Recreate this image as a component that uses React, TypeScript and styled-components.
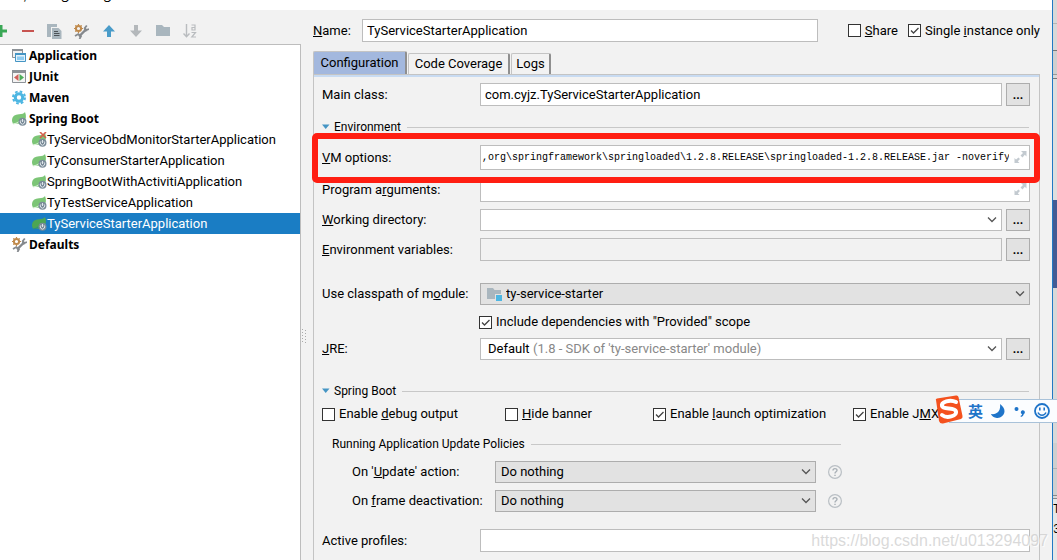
import React from "react";
import styled, { createGlobalStyle } from "styled-components";

const GlobalStyle = createGlobalStyle`
  * { box-sizing: border-box; }
  body {
    margin: 0;
    background: #f2f2f2;
    color: #000;
    font: 13px/20px Roboto, "Noto Sans CJK SC", sans-serif;
  }
  button, input, select { font: inherit; color: inherit; margin: 0; border-radius: 0; }
`;

const line = "#bdbdbd";

/* ---------- frame ---------- */

const Desktop = styled.div`
  position: relative;
  display: flex;
  min-height: 100vh;
  overflow: hidden;
`;

const Dialog = styled.main`
  flex: 1;
  min-width: 0;
  display: flex;
  flex-direction: column;
  border-right: 1px solid #2179c4;
`;

const TitleBar = styled.header`
  display: flex;
  align-items: flex-end;
  height: 10px;
  padding-bottom: 8px;
  overflow: hidden;
  background: #fff;
  white-space: nowrap;
`;

const Title = styled.h1`
  margin: 0;
  font: 400 13px/16px "Noto Sans CJK SC", sans-serif;
`;

const Columns = styled.div`
  flex: 1;
  display: flex;
`;

const Backdrop = styled.div`
  width: 4px;
  overflow: hidden;
  background: #dcdcdc;
`;

const Strip = styled.div<{ $h: number; $bg?: string; $edge?: string }>`
  height: ${(p) => p.$h}px;
  background: ${(p) => p.$bg ?? "#d8d8d8"};
  border-bottom: 1px solid ${(p) => p.$edge ?? "transparent"};
  font: 12px/22px "Liberation Mono", monospace;
`;

/* ---------- left side ---------- */

const Sidebar = styled.aside`
  width: 301px;
  flex: none;
  display: flex;
  flex-direction: column;
`;

const Toolbar = styled.div`
  display: flex;
  align-items: center;
  height: 34px;
  margin-left: -13px;
  padding-top: 8px;
`;

const ToolButton = styled.button`
  display: grid;
  place-items: center;
  width: 27px;
  height: 24px;
  padding: 0;
  border: 0;
  background: none;
`;

const Tree = styled.ul`
  flex: 1;
  margin: 0;
  padding: 0;
  list-style: none;
  background: #fff;
  border: solid ${line};
  border-width: 1px 1px 0 0;
`;

const TreeRow = styled.li<{ $child?: boolean; $selected?: boolean }>`
  display: flex;
  align-items: center;
  height: 21px;
  gap: ${(p) => (p.$child ? 0 : 2)}px;
  padding-left: ${(p) => (p.$child ? 32 : 12)}px;
  ${(p) => !p.$child && `font: 700 12px/20px "Noto Sans", sans-serif;`}
  color: ${(p) => (p.$selected ? "#fff" : "#000")};
  background: ${(p) => (p.$selected ? "#1a7dc4" : "transparent")};
  white-space: nowrap;
  svg { flex: none; }
`;

const Grip = styled.div`
  position: absolute;
  left: 302px;
  top: 329px;
`;

/* ---------- right side ---------- */

const Editor = styled.section`
  flex: 1;
  min-width: 0;
  display: flex;
  flex-direction: column;
  padding: 9px 12px 0;
`;

const NameRow = styled.div`
  display: flex;
  align-items: center;
  label { white-space: nowrap; }
`;

const NameLabel = styled.label`
  width: 49px;
`;

const Tabs = styled.div`
  display: flex;
  align-items: flex-end;
  height: 23px;
  margin-top: 9px;
`;

const Tab = styled.button<{ $active?: boolean; $w: number }>`
  width: ${(p) => p.$w}px;
  height: ${(p) => (p.$active ? 23 : 21)}px;
  margin-right: 1px;
  padding: 0;
  line-height: 20px;
  white-space: nowrap;
  border: solid #c4c4c4;
  border-width: 1px 1px 0;
  border-right: 2px solid #8f8f8f;
  border-radius: 2px 2px 0 0;
  background: ${(p) => (p.$active ? "#a3b8de" : "#f2f2f2")};
`;

const Panel = styled.div`
  flex: 1;
  border: solid #c4c4c4;
  border-width: 1px 1px 0;
  padding-bottom: 8px;
  &::before {
    content: "";
    display: block;
    height: 2px;
    background: #c8dbf2;
  }
`;

const Form = styled.form`
  display: flex;
  flex-direction: column;
  padding: 6px 9px 0 8px;
`;

const Row = styled.div<{ $top?: number }>`
  position: relative;
  display: flex;
  align-items: center;
  margin-top: ${(p) => p.$top ?? 7}px;
`;

const Label = styled.label<{ $w?: number }>`
  width: ${(p) => p.$w ?? 158}px;
  flex: none;
  white-space: nowrap;
`;

const TextInput = styled.input<{ $h?: number; $mono?: boolean }>`
  flex: 1;
  min-width: 0;
  height: ${(p) => p.$h ?? 23}px;
  padding: 0 ${(p) => (p.$mono ? 20 : 4)}px 0 ${(p) => (p.$mono ? 1 : 4)}px;
  border: 1px solid ${line};
  background: #fff;
  outline: none;
  ${(p) => p.$mono && `font-family: "Liberation Mono", monospace; font-size: 10px;`}
  &:disabled { background: #f2f2f2; }
`;

const NameInput = styled(TextInput)`
  max-width: 456px;
  margin-right: auto;
`;

const MoreButton = styled.button<{ $h?: number }>`
  width: 24px;
  height: ${(p) => p.$h ?? 23}px;
  margin-left: 4px;
  padding: 0;
  border: 1px solid #adadad;
  background: #e2e2e2;
  font-size: 12px;
  font-weight: 700;
  line-height: 18px;
`;

const SelectBox = styled.div<{ $gray?: boolean }>`
  position: relative;
  display: flex;
  flex: 1;
  height: 22px;
  border: 1px solid ${(p) => (p.$gray ? "#adadad" : line)};
  background: ${(p) => (p.$gray ? "#e2e2e2" : "#fff")};
`;

const Select = styled.select<{ $left?: number }>`
  appearance: none;
  width: 100%;
  padding: 0 24px 0 ${(p) => p.$left ?? 5}px;
  border: 0;
  outline: none;
  background: none;
`;

/* Decorations drawn over a control; clicks pass through to it. */
const Adornment = styled.span<{ $left?: number; $right?: number }>`
  position: absolute;
  top: 0;
  bottom: 0;
  ${(p) => (p.$left !== undefined ? `left: ${p.$left}px;` : `right: ${p.$right ?? 4}px;`)}
  display: flex;
  align-items: center;
  color: #888;
  pointer-events: none;
`;

const CheckLabel = styled.label<{ $left?: number }>`
  display: flex;
  align-items: center;
  gap: 4px;
  height: 20px;
  margin-left: ${(p) => p.$left ?? 0}px;
  white-space: nowrap;
`;

const CheckBox = styled.span`
  position: relative;
  width: 13px;
  height: 13px;
  input {
    appearance: none;
    display: block;
    width: 13px;
    height: 13px;
    border: 1px solid #333;
    background: #fff;
  }
  svg { position: absolute; left: 0; top: 0; pointer-events: none; display: none; }
  input:checked + svg { display: block; }
`;

const CheckGrid = styled.div`
  display: grid;
  grid-template-columns: 183px 148px 200px auto;
  margin-top: 3px;
`;

const Heading = styled.h2<{ $top: number }>`
  display: flex;
  align-items: center;
  gap: 4px;
  height: 20px;
  margin: ${(p) => p.$top}px 1px 0 0;
  font-size: 12px;
  font-weight: 400;
  white-space: nowrap;
  &::after {
    content: "";
    flex: 1;
    height: 1px;
    margin-left: 2px;
    background: #c8c8c8;
  }
`;

const Policies = styled.fieldset`
  max-width: 520px;
  min-width: 0;
  margin: 10px 0 0;
  padding: 0 0 0 10px;
  border: 0;
`;

const PolicyRow = styled(Row)`
  padding-left: 20px;
`;

const HelpButton = styled.button`
  display: grid;
  width: 14px;
  height: 14px;
  margin-left: 12px;
  padding: 0;
  border: 0;
  background: none;
`;

const Highlight = styled.div`
  position: absolute;
  z-index: 1;
  inset: -12px -10px -13px -10px;
  border: 6px solid #ff1e12;
  border-radius: 5px;
  pointer-events: none;
`;

/* ---------- floating layers ---------- */

const ImeBar = styled.div`
  position: absolute;
  z-index: 2;
  right: 0;
  top: 399px;
  display: flex;
  align-items: center;
  gap: 8px;
  width: 108px;
  height: 24px;
  padding-left: 19px;
  border: solid #a9c2d9;
  border-width: 1px 0;
  background: #fbfdff;
  color: #1e74c9;
  font: 700 15px/22px "Noto Sans CJK SC", sans-serif;
`;

const ImeLogo = styled.span`
  position: absolute;
  left: -15px;
  top: -5px;
`;

const Watermark = styled.div`
  position: absolute;
  z-index: 3;
  right: 9px;
  bottom: 9px;
  color: rgba(205, 205, 205, 0.75);
  text-shadow: 1px 1px 0 rgba(255, 255, 255, 0.8);
  font: 16px/20px "Liberation Sans", sans-serif;
  pointer-events: none;
`;

/* ---------- icons ---------- */

const Svg = ({ w = 14, h = w, children }: { w?: number; h?: number; children: React.ReactNode }) => (
  <svg width={w} height={h} viewBox={`0 0 ${w} ${h}`} fill="none" aria-hidden="true">
    {children}
  </svg>
);

const PlusIcon = () => (
  <Svg><path d="M7 1V13M1 7H13" stroke="#3aa856" strokeWidth="3" /></Svg>
);
const MinusIcon = () => (
  <Svg><path d="M1 7H13" stroke="#c75450" strokeWidth="2" /></Svg>
);
const CopyIcon = () => (
  <Svg w={15}>
    <path d="M0 0H10V3H4V13H0Z" fill="#a9b6be" />
    <path d="M5 4H11.500L14.500 7V15H5Z" fill="#a9b6be" />
    <path d="M7 7.500H11M7 9.500H12.500M7 11.500H12.500" stroke="#4c5257" strokeWidth="1" />
  </Svg>
);
const SettingsIcon = () => (
  <Svg w={15}>
    <circle cx="4.500" cy="4.500" r="2.600" stroke="#c08a4c" strokeWidth="2" />
    <path d="M4.500 0V1.500M4.500 7.500V9M0 4.500H1.500M7.500 4.500H9M1.300 1.300L2.400 2.400M7.700 1.300L6.600 2.400M1.300 7.700L2.400 6.600" stroke="#c08a4c" strokeWidth="1.200" />
    <path d="M5 12.500L11 6.500" stroke="#85898d" strokeWidth="2.400" />
    <path d="M12.800 1.500L10.800 4L12.300 6L15 5" stroke="#85898d" strokeWidth="1.800" />
    <path d="M9.800 4L10.300 8L13.500 7L11.500 4.500Z" fill="#85898d" />
    <path d="M1 12L4.300 10L7 12.300L5.500 15" stroke="#85898d" strokeWidth="1.800" />
  </Svg>
);
const ArrowIcon = ({ down }: { down?: boolean }) => (
  <Svg>
    <path
      d={down ? "M5 1H9V6.500H13L7 13L1 6.500H5Z" : "M5 13H9V7.500H13L7 1L1 7.500H5Z"}
      fill={down ? "#b4b8bb" : "#4a9cc9"}
    />
  </Svg>
);
const FolderIcon = () => (
  <Svg><path d="M0 1H6L8 3H14V12H0Z" fill="#a9b6be" /></Svg>
);
const SortIcon = () => (
  <Svg w={14}>
    <path d="M3.500 0V12.500M0.500 9.500L3.500 12.800L6.500 9.500" stroke="#b9bcbf" strokeWidth="1.400" />
    <path d="M8.500 1H12V6H9V3.500H12M8.500 8.500H12.500L8.800 13H13" stroke="#b9bcbf" strokeWidth="1.200" />
  </Svg>
);
const AppIcon = () => (
  <Svg w={15}>
    <path d="M.5 1.500H10.500V9.500H.5Z" fill="#f1f1f1" stroke="#8d9297" />
    <path d="M0 1H11V3H0Z" fill="#8d9297" />
    <path d="M3.500 5.500H13.500V13.500H3.500Z" fill="#e5f3fb" stroke="#4595c4" />
    <path d="M3 5H14V7H3Z" fill="#4595c4" />
    <path d="M5 8.500H12V12H5Z" fill="#8ecbf0" />
  </Svg>
);
const JUnitIcon = () => (
  <Svg w={15}>
    <path d="M.5 1.500H13.500V13.500H.5Z" fill="#f4f4f4" stroke="#8d9297" />
    <path d="M0 1H14V4H0Z" fill="#8d9297" />
    <path d="M6.500 5V12L2 8.500Z" fill="#d0605a" />
    <path d="M7.500 5V12L12 8.500Z" fill="#4fae5c" />
  </Svg>
);
const GearIcon = () => (
  <Svg w={15}>
    <circle cx="7" cy="7.500" r="3.700" stroke="#4db6e2" strokeWidth="3" />
    <circle cx="7" cy="7.500" r="6" stroke="#4db6e2" strokeWidth="2" strokeDasharray="2.600 2.112" />
  </Svg>
);
const SpringIcon = ({ invalid, selected }: { invalid?: boolean; selected?: boolean }) => (
  <Svg w={15}>
    <path
      d="M0 10C0 5 3 3.500 7 3.300C10 3.100 12 2.500 13 1C14.500 5 14.300 8 12 10.500C9 13.500 5 13 3 12L1 13Z"
      fill={selected ? "#4da653" : "#7cc576"}
    />
    <path d="M1 13C4 12.500 6 11.500 8 9.500" stroke={selected ? "#2f8f80" : "#d5efd2"} strokeWidth="1" />
    <circle cx="10.500" cy="10.800" r="4" fill="#7b8c99" />
    <path d="M9 9.300A2.200 2.200 0 1 0 12 9.300M10.500 8V11" stroke="#dfe6ea" strokeWidth="1" />
    {invalid && <path d="M8 0L14 6M14 0L8 6" stroke="#d5604c" strokeWidth="1.600" />}
  </Svg>
);
const ModuleIcon = () => (
  <Svg w={16}>
    <path d="M0 2H6L7.500 4H14V13H0Z" fill="#a9b6be" />
    <path d="M8 8H16V16H8Z" fill="#e2e2e2" />
    <path d="M9 9H15V15H9Z" fill="#4db6e2" />
  </Svg>
);
const Chevron = () => (
  <Svg w={10} h={8}><path d="M1 1.500L5 5.500L9 1.500" stroke="#555" strokeWidth="1.300" /></Svg>
);
const ExpandIcon = () => (
  <Svg w={13}>
    <path d="M7 0H12.500V5.500L10.800 3.800L8.500 6.500L6.500 4.500L9 2ZM.5 7L2 8.500L4.500 6.500L6 8L3.800 10.300L5.500 12H.5Z" fill="#c3cad0" />
  </Svg>
);
const Triangle = () => (
  <Svg w={8}><path d="M0 1.500H7.500L3.700 6Z" fill="#4595c4" /></Svg>
);
const HelpIcon = () => (
  <Svg>
    <circle cx="7" cy="7" r="6.400" stroke="#b9bfc4" strokeWidth="1.200" />
    <path d="M5 5.500C5 3 9 3 9 5.300C9 6.800 7 6.800 7 8.500M7 9.800V11" stroke="#a9b0b6" strokeWidth="1.400" />
  </Svg>
);

/* ---------- composed controls ---------- */

const Check = ({ children, left, on }: { children: React.ReactNode; left?: number; on?: boolean }) => (
  <CheckLabel $left={left}>
    <CheckBox>
      <input type="checkbox" defaultChecked={on} />
      <Svg w={13}><path d="M3 6.500L5.500 9L10.500 4" stroke="#444" strokeWidth="1.300" /></Svg>
    </CheckBox>
    <span>{children}</span>
  </CheckLabel>
);

const Dropdown = ({
  id, value, gray, left, children,
}: { id: string; value: string; gray?: boolean; left?: number; children?: React.ReactNode }) => (
  <SelectBox $gray={gray}>
    <Select id={id} $left={left} defaultValue={value}>
      <option value={value}>{value}</option>
    </Select>
    {children}
    <Adornment $right={4}><Chevron /></Adornment>
  </SelectBox>
);

const More = ({ h, label }: { h?: number; label: string }) => (
  <MoreButton type="button" $h={h} aria-label={label}>...</MoreButton>
);

const tools = [
  { name: "Add", icon: <PlusIcon /> },
  { name: "Remove", icon: <MinusIcon /> },
  { name: "Copy", icon: <CopyIcon /> },
  { name: "Edit defaults", icon: <SettingsIcon /> },
  { name: "Move up", icon: <ArrowIcon /> },
  { name: "Move down", icon: <ArrowIcon down /> },
  { name: "New folder", icon: <FolderIcon /> },
  { name: "Sort", icon: <SortIcon /> },
];

const tree = [
  { text: "Application", icon: <AppIcon /> },
  { text: "JUnit", icon: <JUnitIcon /> },
  { text: "Maven", icon: <GearIcon /> },
  { text: "Spring Boot", icon: <SpringIcon /> },
  { text: "TyServiceObdMonitorStarterApplication", icon: <SpringIcon invalid />, child: true },
  { text: "TyConsumerStarterApplication", icon: <SpringIcon />, child: true },
  { text: "SpringBootWithActivitiApplication", icon: <SpringIcon />, child: true },
  { text: "TyTestServiceApplication", icon: <SpringIcon />, child: true },
  { text: "TyServiceStarterApplication", icon: <SpringIcon selected />, child: true, selected: true },
  { text: "Defaults", icon: <SettingsIcon /> },
];

const vmOptions =
  ",org\\springframework\\springloaded\\1.2.8.RELEASE\\springloaded-1.2.8.RELEASE.jar -noverify";

export default function App() {
  return (
    <>
      <GlobalStyle />
      <Desktop>
        <Dialog>
          <TitleBar><Title>Run/Debug Configurations</Title></TitleBar>
          <Columns>
            <Sidebar>
              <Toolbar>
                {tools.map((t) => (
                  <ToolButton key={t.name} type="button" aria-label={t.name}>{t.icon}</ToolButton>
                ))}
              </Toolbar>
              <Tree>
                {tree.map((t) => (
                  <TreeRow key={t.text} $child={t.child} $selected={t.selected}>
                    {t.icon}
                    <span>{t.text}</span>
                  </TreeRow>
                ))}
              </Tree>
            </Sidebar>
            <Grip>
              <Svg w={4} h={15}>
                <path d="M.5 0V15M3.500 1V15" stroke="#aaa" strokeDasharray="1 2" />
              </Svg>
            </Grip>

            <Editor>
              <NameRow>
                <NameLabel htmlFor="name"><u>N</u>ame:</NameLabel>
                <NameInput id="name" defaultValue="TyServiceStarterApplication" />
                <Check><u>S</u>hare</Check>
                <Check left={10} on>Single <u>i</u>nstance only</Check>
              </NameRow>

              <Tabs>
                <Tab type="button" $active $w={94}>Configuration</Tab>
                <Tab type="button" $w={102}>Code Coverage</Tab>
                <Tab type="button" $w={40}>Logs</Tab>
              </Tabs>

              <Panel>
                <Form>
                  <Row $top={0}>
                    <Label htmlFor="main">Main class:</Label>
                    <TextInput id="main" defaultValue="com.cyjz.TyServiceStarterApplication" />
                    <More label="Browse main class" />
                  </Row>

                  <Heading $top={11}><Triangle />Environment</Heading>

                  <Row $top={8}>
                    <Label htmlFor="vm"><u>V</u>M options:</Label>
                    <TextInput id="vm" $h={25} $mono defaultValue={vmOptions} />
                    <Adornment $right={3}><ExpandIcon /></Adornment>
                    <Highlight />
                  </Row>
                  <Row>
                    <Label htmlFor="args">Program a<u>r</u>guments:</Label>
                    <TextInput id="args" $h={25} $mono />
                    <Adornment $right={3}><ExpandIcon /></Adornment>
                  </Row>
                  <Row>
                    <Label htmlFor="dir"><u>W</u>orking directory:</Label>
                    <Dropdown id="dir" value="" />
                    <More h={22} label="Browse directory" />
                  </Row>
                  <Row>
                    <Label htmlFor="env"><u>E</u>nvironment variables:</Label>
                    <TextInput id="env" disabled />
                    <More label="Edit variables" />
                  </Row>
                  <Row $top={22}>
                    <Label htmlFor="module">Use classpath of m<u>o</u>dule:</Label>
                    <Dropdown id="module" value="ty-service-starter" gray left={25}>
                      <Adornment $left={6}><ModuleIcon /></Adornment>
                    </Dropdown>
                  </Row>
                  <Row>
                    <Check left={157} on>Include dependencies with "Provided" scope</Check>
                  </Row>
                  <Row $top={6}>
                    <Label htmlFor="jre"><u>J</u>RE:</Label>
                    <Dropdown id="jre" value="Default" left={7}>
                      <Adornment $left={52}>(1.8 - SDK of 'ty-service-starter' module)</Adornment>
                    </Dropdown>
                    <More h={22} label="Browse JRE" />
                  </Row>

                  <Heading $top={21}><Triangle />Spring Boot</Heading>
                  <CheckGrid>
                    <Check>Enable <u>d</u>ebug output</Check>
                    <Check><u>H</u>ide banner</Check>
                    <Check on>Enable <u>l</u>aunch optimization</Check>
                    <Check on>Enable J<u>M</u>X</Check>
                  </CheckGrid>

                  <Policies>
                    <Heading $top={0}>Running Application Update Policies</Heading>
                    <PolicyRow>
                      <Label htmlFor="update" $w={143}>On '<u>U</u>pdate' action:</Label>
                      <Dropdown id="update" value="Do nothing" gray />
                      <HelpButton type="button" aria-label="Help on update"><HelpIcon /></HelpButton>
                    </PolicyRow>
                    <PolicyRow>
                      <Label htmlFor="frame" $w={143}>On <u>f</u>rame deactivation:</Label>
                      <Dropdown id="frame" value="Do nothing" gray />
                      <HelpButton type="button" aria-label="Help on deactivation"><HelpIcon /></HelpButton>
                    </PolicyRow>
                  </Policies>

                  <Row $top={17}>
                    <Label htmlFor="profiles">Active profiles:</Label>
                    <TextInput id="profiles" />
                  </Row>
                </Form>
              </Panel>
            </Editor>
          </Columns>
        </Dialog>

        <Backdrop>
          <Strip $h={24} $edge="#b5b5b5" />
          <Strip $h={27} $edge="#777" />
          <Strip $h={24} $bg="#cfcfcf" $edge="#999" />
          <Strip $h={4} $edge="#777" />
          <Strip $h={121} $bg="#dedede" />
          <Strip $h={88} $bg="#435b94" $edge="#435b94" />
          <Strip $h={155} />
          <Strip $h={26} $bg="#cfcfcf" $edge="#b0b0b0" />
          <Strip $h={27} $bg="#cfcfcf" $edge="#888" />
          <Strip $h={3} $edge="#888" />
          <Strip $h={20} $bg="#e6e6e6">T</Strip>
          <Strip $h={41} $bg="#e6e6e6">3</Strip>
        </Backdrop>

        <ImeBar>
          <ImeLogo>
            <Svg w={29}>
              <path d="M2 5Q1 4 3 3.500L22 .5Q24 0 24.500 2L28.500 21Q29 23 27 24L9 28.500Q6 29 5 26Z" fill="#f4511e" />
              <path d="M22 7C16 4 7 7 8 11C9 15 21 12 22 16.500C23 21 13 24 8 20" stroke="#fff" strokeWidth="4" strokeLinecap="round" />
            </Svg>
          </ImeLogo>
          <span>英</span>
          <Svg w={14}><path d="M9 0C15 4 15 11 9 13.500C5 15 1 13 0 10C6 11 10 7 9 0Z" fill="#1e74c9" /></Svg>
          <Svg w={12}>
            <circle cx="3.500" cy="4" r="2" fill="#1e74c9" />
            <path d="M8 6.500A2 2 0 1 1 10.800 9C10.500 10.500 9.500 11.500 8 12L7.500 11C8.500 10.500 9 10 9 9A2 2 0 0 1 8 6.500Z" fill="#1e74c9" />
          </Svg>
          <Svg w={18}>
            <circle cx="9" cy="9" r="7" stroke="#1e74c9" strokeWidth="1.800" />
            <path d="M6.800 5.500V8.500M11.200 5.500V8.500" stroke="#1e74c9" strokeWidth="1.600" />
            <path d="M5 10.500C6.500 14 11.500 14 13 10.500" stroke="#1e74c9" strokeWidth="1.500" />
          </Svg>
        </ImeBar>
        <Watermark>https://blog.csdn.net/u013294097</Watermark>
      </Desktop>
    </>
  );
}
